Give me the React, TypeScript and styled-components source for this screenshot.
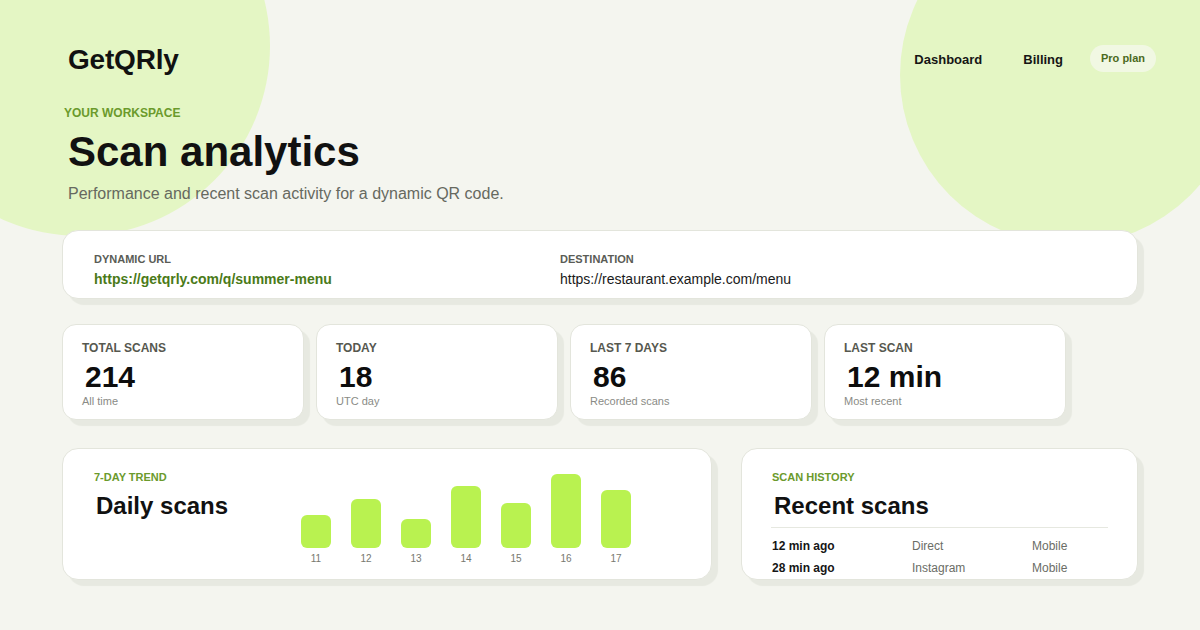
import React from "react";
import styled, { createGlobalStyle } from "styled-components";

const GlobalStyle = createGlobalStyle`
  * { box-sizing: border-box; }
  body {
    margin: 0;
    background: #f4f5ef;
    font-family: "Liberation Sans", Arial, sans-serif;
    color: #111;
  }
`;

const Page = styled.div`
  position: relative;
  width: 1200px;
  height: 630px;
  overflow: hidden;
  background: #f4f5ef;
`;

const Blob = styled.div<{ $left: number; $top: number; $size: number }>`
  position: absolute;
  left: ${(p) => p.$left}px;
  top: ${(p) => p.$top}px;
  width: ${(p) => p.$size}px;
  height: ${(p) => p.$size}px;
  border-radius: 50%;
  background: #e4f6c4;
`;

const Content = styled.div`
  position: relative;
  padding: 0 62px;
`;

const Header = styled.header`
  display: flex;
  align-items: center;
  justify-content: space-between;
  height: 40px;
  margin-top: 40px;
`;

const Logo = styled.div`
  font-size: 28px;
  font-weight: 700;
  margin-left: 6px;
  letter-spacing: -0.2px;
`;

const Nav = styled.nav`
  display: flex;
  align-items: center;
  gap: 13px;
  margin-right: -18px;
  margin-top: -2px;
`;

const NavLink = styled.a`
  padding: 0 14px;
  font-size: 13px;
  font-weight: 700;
  color: #151515;
  text-decoration: none;
`;

const PlanPill = styled.span`
  display: inline-flex;
  align-items: center;
  height: 27px;
  padding: 0 11px;
  margin-top: -2px;
  border-radius: 14px;
  background: #f1f8e3;
  font-size: 11px;
  font-weight: 700;
  color: #4b6a1e;
`;

const Hero = styled.section`
  padding-left: 6px;
  margin-top: 26px;
`;

const Eyebrow = styled.div<{ $shift?: number; $size?: number }>`
  font-size: ${(p) => p.$size ?? 12}px;
  line-height: 14px;
  font-weight: 700;
  color: #6b9a2c;
  margin-left: ${(p) => p.$shift ?? 0}px;
`;

const Title = styled.h1`
  margin: 7px 0 0;
  font-size: 42px;
  line-height: 50px;
  font-weight: 700;
`;

const Subtitle = styled.p`
  margin: 7px 0 0;
  font-size: 16px;
  line-height: 20px;
  color: #66695f;
`;

const Card = styled.div<{ $radius?: number }>`
  background: #fff;
  border: 1px solid #e3e5dc;
  border-radius: ${(p) => p.$radius ?? 16}px;
  box-shadow: 6px 6px 1px rgba(40, 50, 20, 0.06);
`;

const UrlCard = styled(Card)`
  display: grid;
  grid-template-columns: 466px 1fr;
  height: 69px;
  margin-top: 26px;
  padding: 22px 31px 0;
`;

const FieldLabel = styled.div`
  font-size: 11px;
  line-height: 13px;
  font-weight: 700;
  color: #5a5c56;
`;

const FieldValue = styled.div<{ $accent?: boolean }>`
  margin-top: 5px;
  font-size: 14px;
  line-height: 17px;
  font-weight: ${(p) => (p.$accent ? 700 : 400)};
  color: ${(p) => (p.$accent ? "#4a7a18" : "#1a1a1a")};
`;

const StatsRow = styled.div`
  display: grid;
  grid-template-columns: repeat(4, 242px);
  gap: 12px;
  margin-top: 25px;
`;

const StatCard = styled(Card)`
  height: 96px;
  padding: 16px 19px 0;
`;

const StatLabel = styled.div`
  font-size: 12px;
  line-height: 14px;
  font-weight: 700;
  color: #56584f;
`;

const StatValue = styled.div`
  margin: 6px 0 0 3px;
  font-size: 30px;
  line-height: 32px;
  font-weight: 700;
  color: #0d0d0d;
`;

const StatNote = styled.div`
  margin-top: 1px;
  font-size: 11px;
  line-height: 14px;
  color: #8a8b86;
`;

const BottomRow = styled.div`
  display: grid;
  grid-template-columns: 650px 397px;
  gap: 29px;
  margin-top: 28px;
`;

const PanelCard = styled(Card)`
  height: 132px;
  overflow: hidden;
`;

const TrendCard = styled(PanelCard)`
  display: grid;
  grid-template-columns: 207px auto;
  padding: 21px 31px 0;
`;

const PanelTitle = styled.h2`
  margin: 8px 0 0 2px;
  font-size: 24px;
  line-height: 28px;
  font-weight: 700;
`;

const Chart = styled.div`
  display: flex;
  gap: 20px;
`;

const BarColumn = styled.div`
  display: flex;
  flex-direction: column;
  align-items: center;
  width: 30px;
`;

const BarTrack = styled.div`
  display: flex;
  align-items: flex-end;
  height: 78px;
`;

const Bar = styled.div`
  width: 30px;
  border-radius: 6px;
  background: #b9f250;
`;

const BarLabel = styled.div`
  margin-top: 5px;
  font-size: 10px;
  line-height: 12px;
  color: #77796f;
`;

const HistoryCard = styled(PanelCard)`
  padding: 21px 29px 0;
`;

const HistoryHead = styled.div`
  padding-left: 1px;
  padding-bottom: 7px;
  border-bottom: 1px solid #e6e8e0;
`;

const HistoryList = styled.div`
  padding-top: 7px;
`;

const HistoryRow = styled.div`
  display: grid;
  grid-template-columns: 140px 120px 1fr;
  height: 22px;
  align-items: center;
  padding-left: 1px;
  font-size: 12px;
`;

const Cell = styled.span<{ $strong?: boolean }>`
  font-weight: ${(p) => (p.$strong ? 700 : 400)};
  color: ${(p) => (p.$strong ? "#161616" : "#6b6d66")};
`;

const stats = [
  { label: "TOTAL SCANS", value: "214", note: "All time" },
  { label: "TODAY", value: "18", note: "UTC day" },
  { label: "LAST 7 DAYS", value: "86", note: "Recorded scans" },
  { label: "LAST SCAN", value: "12 min", note: "Most recent" },
];

const daily = [
  { day: "11", count: 8 },
  { day: "12", count: 12 },
  { day: "13", count: 7 },
  { day: "14", count: 15 },
  { day: "15", count: 11 },
  { day: "16", count: 18 },
  { day: "17", count: 14 },
];

const recent = [
  { when: "12 min ago", source: "Direct", device: "Mobile" },
  { when: "28 min ago", source: "Instagram", device: "Mobile" },
];

const maxCount = Math.max(...daily.map((d) => d.count));

export default function App() {
  return (
    <Page>
      <GlobalStyle />
      <Blob $left={-110} $top={-144} $size={380} />
      <Blob $left={900} $top={-95} $size={340} />
      <Content>
        <Header>
          <Logo>GetQRly</Logo>
          <Nav>
            <NavLink>Dashboard</NavLink>
            <NavLink>Billing</NavLink>
            <PlanPill>Pro plan</PlanPill>
          </Nav>
        </Header>

        <Hero>
          <Eyebrow $shift={-4}>YOUR WORKSPACE</Eyebrow>
          <Title>Scan analytics</Title>
          <Subtitle>Performance and recent scan activity for a dynamic QR code.</Subtitle>
        </Hero>

        <UrlCard>
          <div>
            <FieldLabel>DYNAMIC URL</FieldLabel>
            <FieldValue $accent>https://getqrly.com/q/summer-menu</FieldValue>
          </div>
          <div>
            <FieldLabel>DESTINATION</FieldLabel>
            <FieldValue>https://restaurant.example.com/menu</FieldValue>
          </div>
        </UrlCard>

        <StatsRow>
          {stats.map((s) => (
            <StatCard key={s.label} $radius={14}>
              <StatLabel>{s.label}</StatLabel>
              <StatValue>{s.value}</StatValue>
              <StatNote>{s.note}</StatNote>
            </StatCard>
          ))}
        </StatsRow>

        <BottomRow>
          <TrendCard>
            <div>
              <Eyebrow $size={11}>7-DAY TREND</Eyebrow>
              <PanelTitle>Daily scans</PanelTitle>
            </div>
            <Chart>
              {daily.map((d) => (
                <BarColumn key={d.day}>
                  <BarTrack>
                    <Bar style={{ height: Math.round((d.count / maxCount) * 74) }} />
                  </BarTrack>
                  <BarLabel>{d.day}</BarLabel>
                </BarColumn>
              ))}
            </Chart>
          </TrendCard>

          <HistoryCard>
            <HistoryHead>
              <Eyebrow $size={11}>SCAN HISTORY</Eyebrow>
              <PanelTitle>Recent scans</PanelTitle>
            </HistoryHead>
            <HistoryList>
              {recent.map((r) => (
                <HistoryRow key={r.when}>
                  <Cell $strong>{r.when}</Cell>
                  <Cell>{r.source}</Cell>
                  <Cell>{r.device}</Cell>
                </HistoryRow>
              ))}
            </HistoryList>
          </HistoryCard>
        </BottomRow>
      </Content>
    </Page>
  );
}
